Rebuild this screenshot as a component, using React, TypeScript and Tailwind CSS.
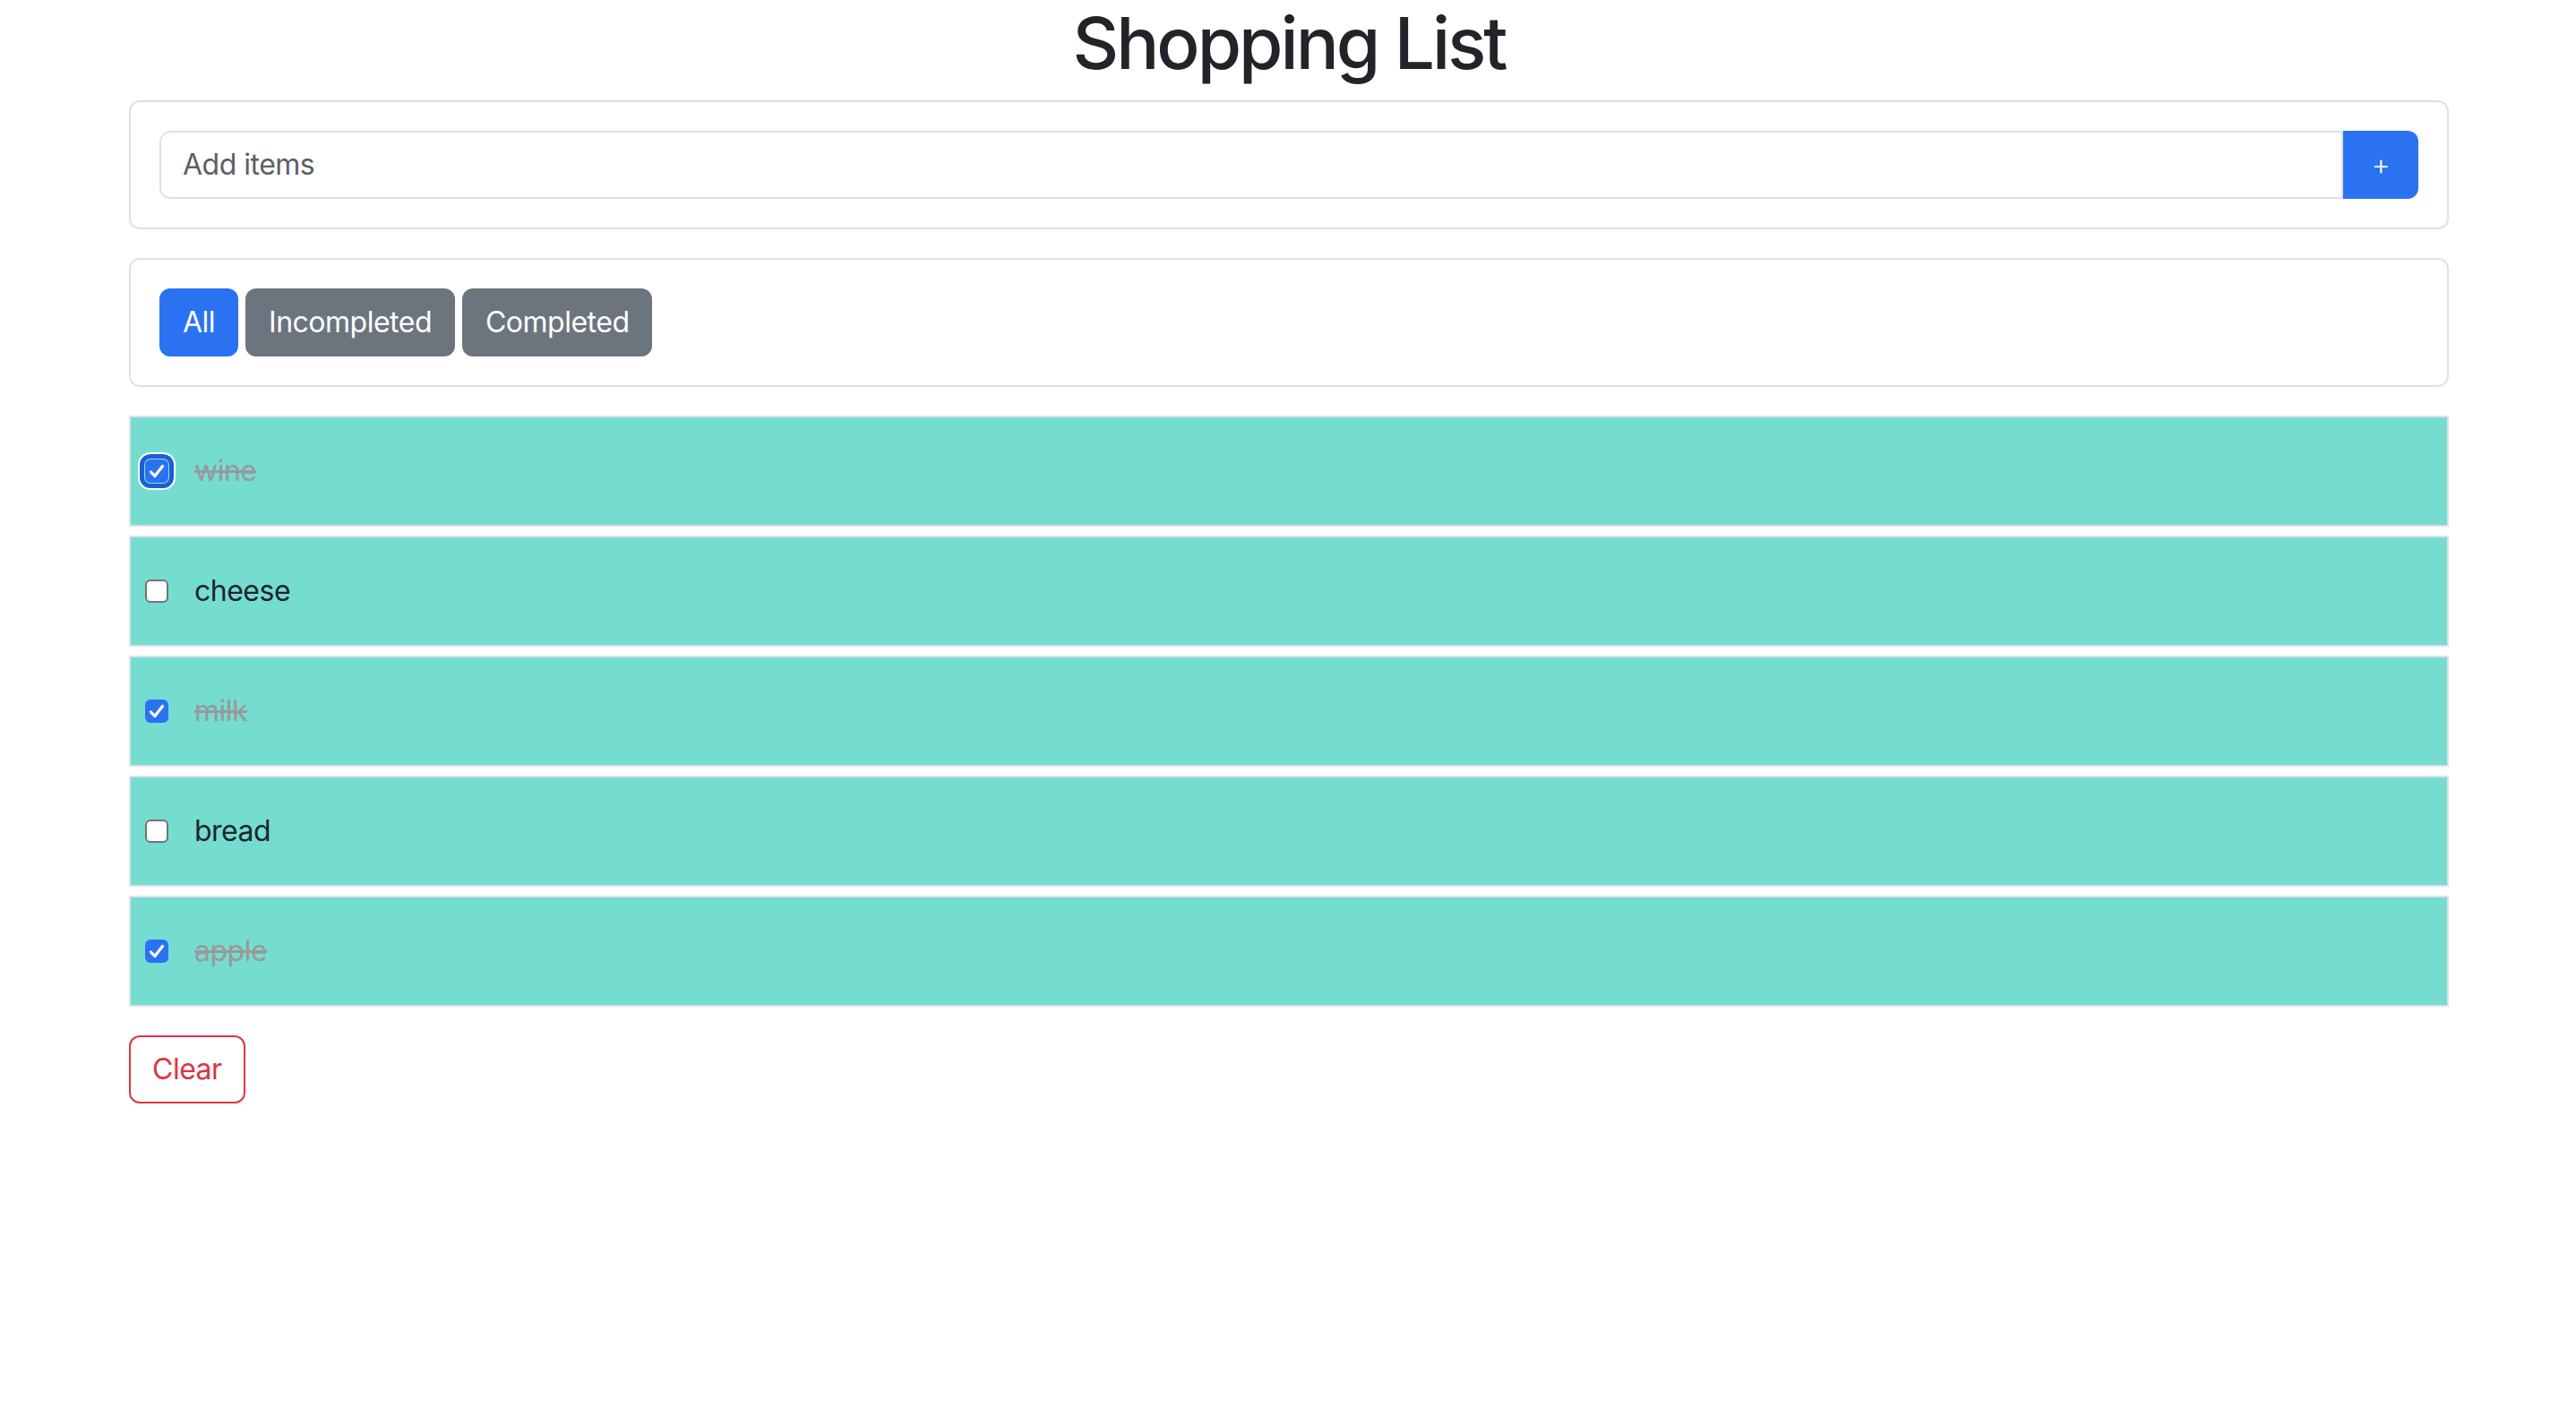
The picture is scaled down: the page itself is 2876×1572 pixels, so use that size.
import React from "react";

type Item = { name: string; done: boolean; focused?: boolean };

const items: Item[] = [
  { name: "wine", done: true, focused: true },
  { name: "cheese", done: false },
  { name: "milk", done: true },
  { name: "bread", done: false },
  { name: "apple", done: true },
];

function Check({ checked, focused }: { checked: boolean; focused?: boolean }) {
  if (!checked) {
    return (
      <span className="block w-[26px] h-[26px] shrink-0 rounded-[6px] border-2 border-[#737373] bg-white" />
    );
  }
  return (
    <span
      className={
        focused
          ? "flex w-[26px] h-[26px] shrink-0 items-center justify-center rounded-[6px] bg-[#2a72f2] shadow-[0_0_0_1px_#86e3d9,0_0_0_6px_#1c5fd2,0_0_0_8px_#ffffff]"
          : "flex w-[26px] h-[26px] shrink-0 items-center justify-center rounded-[6px] bg-[#2a72f2]"
      }
    >
      <svg width="26" height="26" viewBox="0 0 26 26">
        <path
          d="M6.5 14 L10.8 18.5 L19.5 7.5"
          fill="none"
          stroke="#ffffff"
          strokeWidth="3.2"
          strokeLinecap="round"
          strokeLinejoin="round"
        />
      </svg>
    </span>
  );
}

export default function App() {
  return (
    <div className="min-h-screen bg-white text-[#212529] tracking-[-0.5px] font-['Inter','Liberation_Sans',sans-serif]">
      <div className="mx-auto w-[2640px] pl-[26px] pr-[24px]">
        <h1 className="text-center text-[80px] leading-[1.2] font-medium tracking-[-3px] mb-[16px]">
          Shopping List
        </h1>

        <div className="border-2 border-[#dee2e6] rounded-[12px] p-[32px] mb-[32px]">
          <div className="flex h-[76px]">
            <input
              placeholder="Add items"
              className="flex-1 min-w-0 border-2 border-[#dee2e6] rounded-l-[12px] px-[24px] text-[32px] text-[#212529] placeholder:text-[#5c6064] outline-none bg-white"
            />
            <button className="w-[84px] shrink-0 bg-[#2a72f2] rounded-r-[12px] text-white text-[32px] font-light flex items-center justify-center">
              +
            </button>
          </div>
        </div>

        <div className="border-2 border-[#dee2e6] rounded-[12px] p-[32px] mb-[32px]">
          <div className="flex gap-[8px]">
            <button className="h-[76px] px-[24px] rounded-[12px] border-2 border-[#2a72f2] bg-[#2a72f2] text-white text-[32px] leading-[48px]">
              All
            </button>
            <button className="h-[76px] px-[24px] rounded-[12px] border-2 border-[#6c757d] bg-[#6c757d] text-white text-[32px] leading-[48px]">
              Incompleted
            </button>
            <button className="h-[76px] px-[24px] rounded-[12px] border-2 border-[#6c757d] bg-[#6c757d] text-white text-[32px] leading-[48px]">
              Completed
            </button>
          </div>
        </div>

        <div className="flex flex-col gap-[10px]">
          {items.map((it) => (
            <div
              key={it.name}
              className="h-[124px] border-2 border-[#dee2e6] bg-[#74ddd0] flex items-center pl-[16px] gap-[29px]"
            >
              <Check checked={it.done} focused={it.focused} />
              <span
                className={
                  it.done
                    ? "text-[32px] leading-[48px] text-[#999999] line-through"
                    : "text-[32px] leading-[48px] text-[#212529]"
                }
              >
                {it.name}
              </span>
            </div>
          ))}
        </div>

        <button className="mt-[32px] h-[76px] px-[24px] rounded-[12px] border-2 border-[#dc3545] bg-white text-[#dc3545] text-[32px] leading-[48px]">
          Clear
        </button>
      </div>
    </div>
  );
}
